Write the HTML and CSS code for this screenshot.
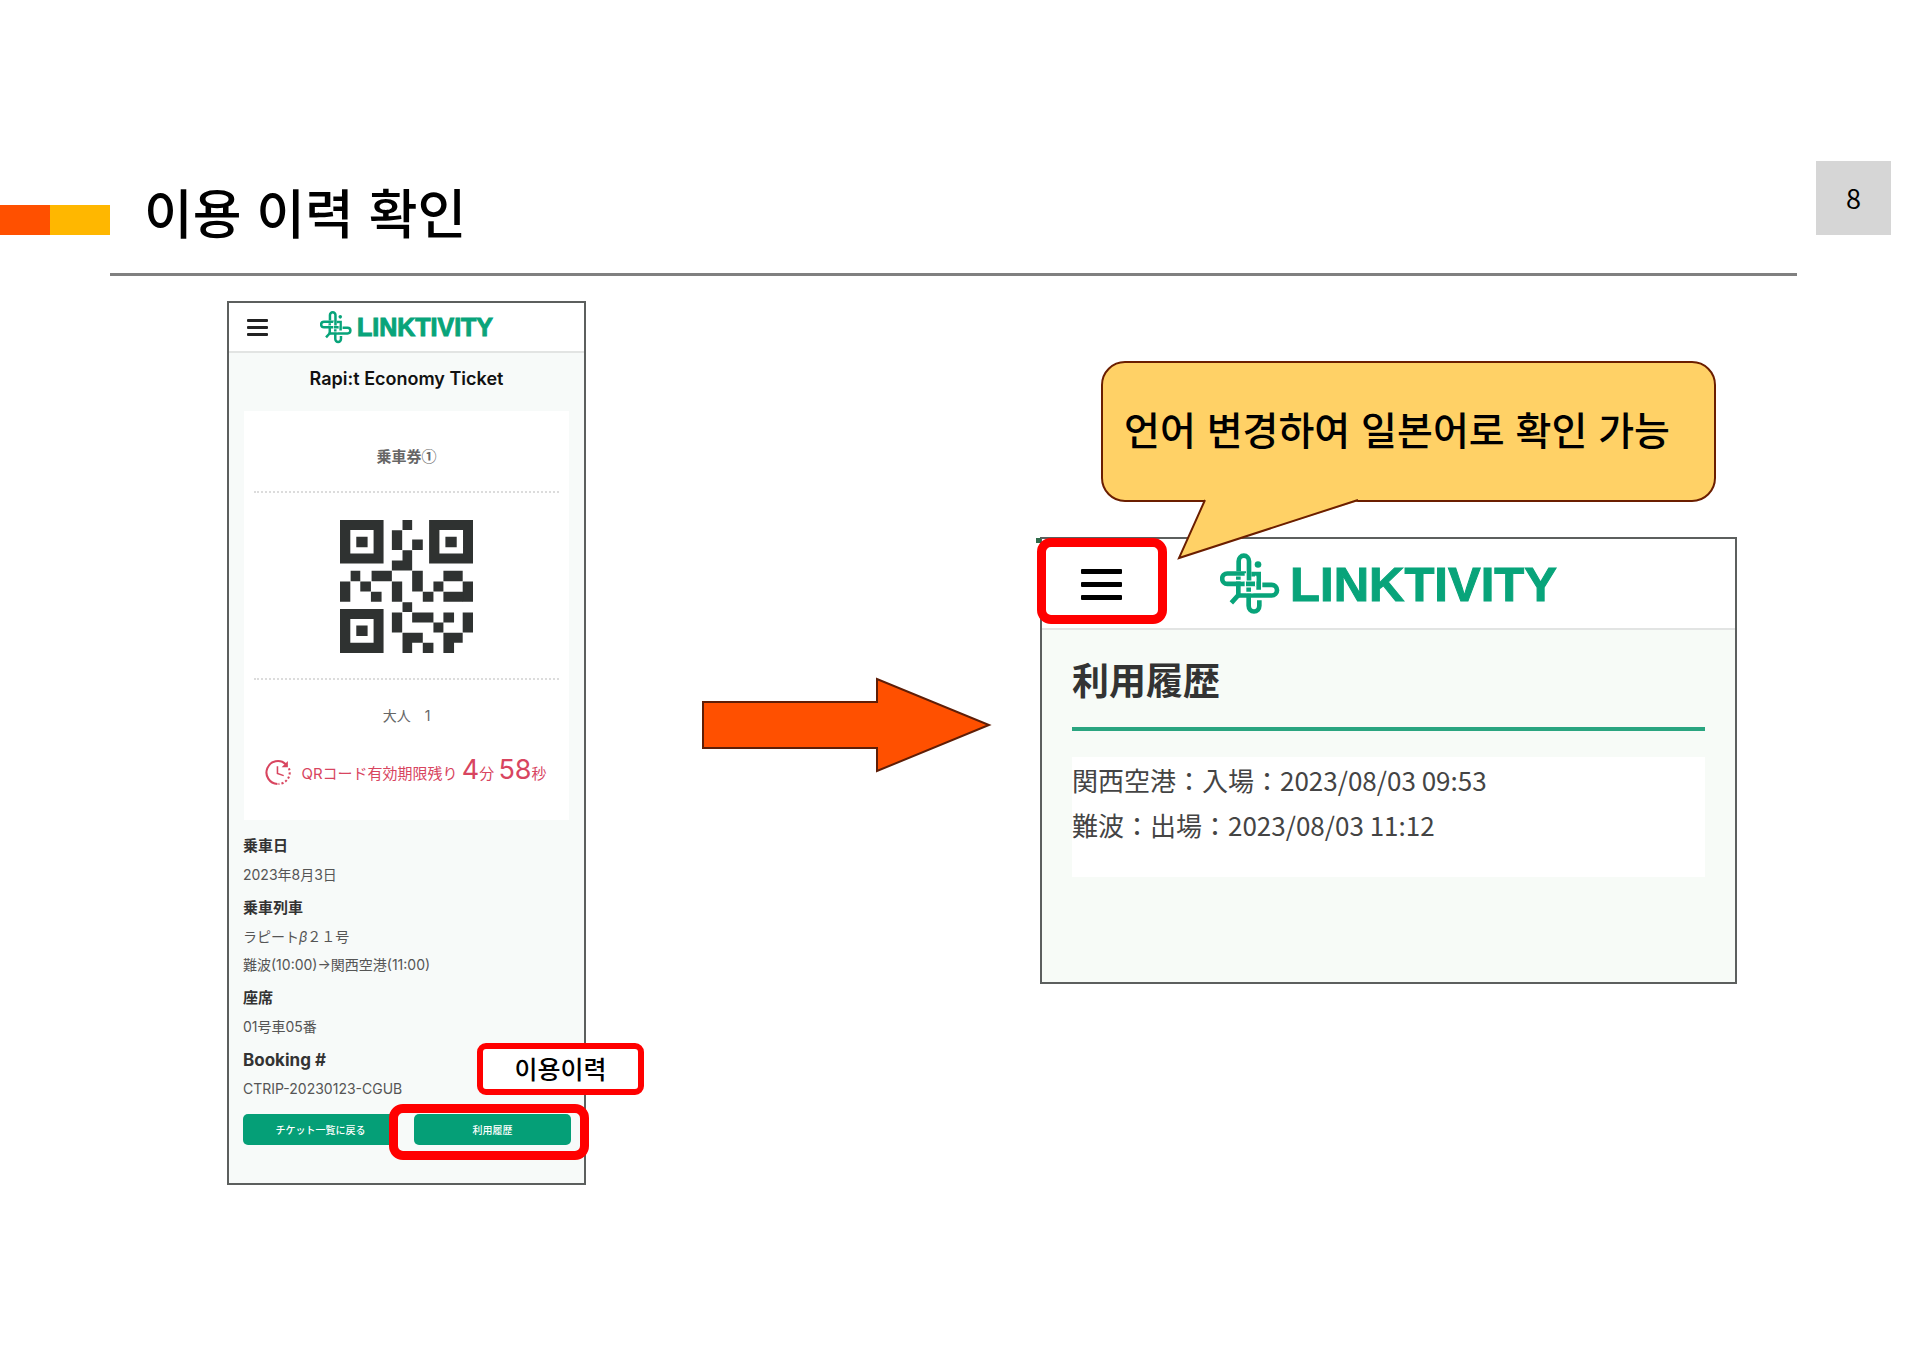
FILE: index.html
```html
<!DOCTYPE html>
<html lang="ko">
<head>
    <meta charset="UTF-8">
    <meta name="viewport" content="width=device-width, initial-scale=1.0">
    <title>이용 이력 확인</title>
    <link rel="stylesheet" href="styles.css">
</head>
<body>
    <!-- shared logo mark -->
    <svg class="sprite" aria-hidden="true">
        <symbol id="logo-mark" viewBox="0 0 180 182">
            <g fill="none" stroke="currentColor" stroke-width="14">
                <path d="M56 54V24a15 16 0 0 1 31 0V82"/>
                <path d="M78 61H22a15 15 0 0 0 0 31H112"/>
                <path d="M94 63H116V110"/>
                <path d="M127 95H155a15 15 0 0 1 0 32H48"/>
                <path d="M86 103V158a15 16 0 0 0 32 0V141"/>
                <path d="M55 70V126L34 149" stroke-linejoin="round"/>
            </g>
            <path d="M76 60V113M107 68V100" stroke="#fff" stroke-width="4"/>
            <path d="M48 82H70M78 118H100" stroke="#fff" stroke-width="4"/>
            <circle cx="114" cy="34" r="10" fill="currentColor"/>
        </symbol>
    </svg>

    <header class="slide-header">
        <div class="accent"></div>
        <h1>이용 이력 확인</h1>
        <div class="page-number">8</div>
    </header>

    <main class="slide-body">
        <section class="screen phone" lang="ja">
            <div class="app-bar">
                <button class="menu-btn" aria-label="menu"><span></span><span></span><span></span></button>
                <a class="logo" href="#"><svg><use href="#logo-mark"/></svg>LINKTIVITY</a>
            </div>

            <h2 class="ticket-name">Rapi:t Economy Ticket</h2>

            <div class="ticket-card">
                <h3>乗車券①</h3>
                <svg class="qr" viewBox="60 60 400 400" fill="#2f3231">
                    <path fill-rule="evenodd" d="M60 60h131v131h-131zM91 90v71h70v-71zM109 110h34v32h-34z"/>
                    <path fill-rule="evenodd" d="M328 60h132v131h-132zM359 90v71h71v-71zM377 110h34v32h-34z"/>
                    <path fill-rule="evenodd" d="M60 328h131v132h-131zM91 358v71h70v-71zM109 377h34v32h-34z"/>
                    <path d="M248 60h29v30h-29zM216 91h31v59h-31zM277 119h32v31h-32zM248 151h29v31h-29zM216 182h61v30h-61z"/>
                    <path d="M92 213h29v31h-29zM155 213h61v31h-61zM277 213h32v62h-32zM371 213h58v31h-58z"/>
                    <path d="M60 245h31v61h-31zM121 245h32v30h-32zM216 245h31v61h-31zM341 245h30v30h-30zM429 245h31v61h-31z"/>
                    <path d="M153 276h32v30h-32zM309 276h32v30h-32zM371 276h59v30h-59zM248 307h29v30h-29z"/>
                    <path d="M216 338h31v60h-31zM277 338h64v30h-64zM371 338h32v30h-32zM429 338h31v60h-31zM341 368h30v30h-30z"/>
                    <path d="M248 399h61v30h-61zM371 399h58v30h-58zM248 429h29v31h-29zM309 429h32v31h-32zM371 429h32v31h-32z"/>
                </svg>
                <p class="passengers">大人　1</p>
                <p class="expires">
                    <svg viewBox="0 0 24 24" fill="none" stroke="currentColor" stroke-width="2">
                        <path d="M11 23A11 11 0 1 1 19 4"/>
                        <path d="M22 8A11 11 0 0 1 12 23" stroke-dasharray="2 2"/>
                        <path d="M11 6V13L17 15" stroke-width="1.5"/>
                        <path d="M21 1V7H15z" fill="currentColor" stroke="none"/>
                    </svg>
                    <span>QRコード有効期限残り <b>4</b>分 <b>58</b>秒</span>
                </p>
            </div>

            <dl class="details">
                <dt>乗車日</dt>
                <dd>2023年8月3日</dd>
                <dt>乗車列車</dt>
                <dd>ラピート<i>β</i>２１号</dd>
                <dd>難波(10:00)→関西空港(11:00)</dd>
                <dt>座席</dt>
                <dd>01号車05番</dd>
                <dt class="latin">Booking #</dt>
                <dd>CTRIP-20230123-CGUB</dd>
            </dl>

            <div class="actions">
                <button>チケット一覧に戻る</button>
                <button class="marked">利用履歴</button>
            </div>

            <div class="note" lang="ko">이용이력</div>
        </section>

        <svg class="arrow" viewBox="0 0 290 96">
            <path d="M1 25H175V2L287 48L175 94V71H1z"/>
        </svg>

        <div class="result">
            <div class="callout">
                언어 변경하여 일본어로 확인 가능
                <svg viewBox="0 0 184 62">
                    <path d="M28 1V0H181V3L2 60L28 3z" class="tail-fill"/>
                    <path d="M28 2L2 60L181 2" class="tail-line"/>
                </svg>
            </div>

            <section class="screen history" lang="ja">
                <div class="app-bar">
                    <button class="menu-btn marked" aria-label="menu"><span></span><span></span><span></span></button>
                    <a class="logo" href="#"><svg><use href="#logo-mark"/></svg>LINKTIVITY</a>
                </div>
                <h2>利用履歴</h2>
                <div class="log">
                    <p>関西空港：入場：2023/08/03 09:53</p>
                    <p>難波：出場：2023/08/03 11:12</p>
                </div>
            </section>
        </div>
    </main>
</body>
</html>
```

FILE: styles.css
```css
* {
    margin: 0;
    padding: 0;
    box-sizing: border-box;
}

body {
    font-family: "Noto Sans CJK KR", sans-serif;
    background-color: #fff;
    color: #000;
    padding-top: 161px;
}

.sprite {
    position: absolute;
    width: 0;
    height: 0;
}

/* slide header */
.slide-header {
    display: grid;
    grid-template-columns: 110px 1fr 75px;
    align-items: start;
    padding-right: 27px;
}

.accent {
    height: 30px;
    margin-top: 44px;
    background: linear-gradient(to right, #ff5000 50px, #ffb700 50px);
}

.slide-header h1 {
    margin-right: 19px;
    padding: 0 0 12px 34px;
    border-bottom: 3px solid #808080;
    font-size: 53px;
    font-weight: 500;
    line-height: 100px;
}

.page-number {
    background-color: #d6d6d6;
    font-size: 27px;
    line-height: 74px;
    text-align: center;
}

/* slide body */
.slide-body {
    display: flex;
    align-items: flex-start;
    padding: 25px 181px 40px 227px;
}

.screen {
    position: relative;
    border: 2px solid #5c5f5e;
    font-family: "Inter", "Noto Sans CJK JP", sans-serif;
    color: #333;
}

.app-bar {
    display: grid;
    grid-template-columns: 1fr auto 1fr;
    align-items: center;
    background-color: #fff;
    border-bottom: 2px solid #e2e4e3;
}

.menu-btn {
    position: relative;
    display: flex;
    flex-direction: column;
    border: none;
    background: none;
    cursor: pointer;
}

.menu-btn span {
    background-color: #222;
    border-radius: 1px;
}

.logo {
    display: flex;
    align-items: center;
    color: #08a47a;
    font-family: "Liberation Sans", sans-serif;
    font-weight: bold;
    text-decoration: none;
    -webkit-text-stroke: 1px #08a47a;
}

.marked {
    position: relative;
}

.marked::after {
    content: "";
    position: absolute;
    border: 9px solid #f00;
    border-radius: 14px;
}

/* ticket screen */
.phone {
    flex: 0 0 359px;
    background-color: #f7faf9;
}

.phone .app-bar {
    height: 50px;
}

.phone .menu-btn {
    width: 21px;
    gap: 4px;
    margin-left: 18px;
}

.phone .menu-btn span {
    height: 3px;
}

.phone .logo {
    gap: 5px;
    font-size: 25px;
}

.phone .logo svg {
    width: 32px;
    height: 34px;
}

.ticket-name {
    margin-bottom: 6px;
    color: #111;
    font-size: 18px;
    font-weight: 600;
    line-height: 52px;
    text-align: center;
}

.ticket-card {
    margin: 0 15px;
    padding: 0 10px 26px;
    background-color: #fff;
    text-align: center;
}

.ticket-card h3 {
    padding: 30px 0 20px;
    border-bottom: 2px dotted #dcdcdc;
    color: #666;
    font-family: "Noto Sans CJK JP", sans-serif;
    font-size: 15px;
    line-height: 30px;
}

.qr {
    display: block;
    width: 133px;
    margin: 27px auto 25px;
}

.passengers {
    padding: 23px 0 21px;
    border-top: 2px dotted #dcdcdc;
    color: #666;
    font-size: 14px;
    line-height: 26px;
}

.expires {
    display: flex;
    align-items: center;
    justify-content: center;
    gap: 10px;
    color: #d8455f;
    font-size: 15px;
    line-height: 40px;
    white-space: nowrap;
}

.expires svg {
    width: 25px;
    height: 25px;
    overflow: visible;
}

.expires b {
    font-size: 27px;
    font-weight: 400;
}

.details {
    margin: 10px 14px;
}

.details dt {
    margin-top: 2px;
    font-size: 15px;
    font-weight: 700;
    line-height: 32px;
}

.details dt.latin {
    font-size: 17px;
}

.details dd {
    padding-bottom: 2px;
    color: #555;
    font-size: 14px;
    line-height: 26px;
}

.actions {
    display: grid;
    grid-template-columns: 1fr 157px;
    gap: 16px;
    padding: 0 13px 38px 14px;
}

.actions button {
    height: 31px;
    border: none;
    border-radius: 5px;
    background-color: #059f77;
    color: #fff;
    font-family: inherit;
    font-size: 10px;
    font-weight: 500;
    cursor: pointer;
}

.actions .marked::after {
    inset: -10px -18px -15px -25px;
}

.note {
    position: absolute;
    top: 740px;
    right: -60px;
    width: 167px;
    padding-bottom: 2px;
    border: 6px solid #f00;
    border-radius: 9px;
    background-color: #fff;
    color: #000;
    font-family: "Noto Sans CJK KR", sans-serif;
    font-size: 25px;
    font-weight: 500;
    line-height: 38px;
    text-align: center;
}

.arrow {
    flex: none;
    width: 290px;
    margin: 376px 48px 0 116px;
    fill: #ff5000;
    stroke: #5e1e07;
    stroke-width: 2;
}

/* history screen with callout */
.result {
    flex: 1;
    padding-top: 60px;
}

.callout {
    position: relative;
    z-index: 1;
    margin: 0 21px 35px 61px;
    padding: 0 0 6px 21px;
    border: 2px solid #6b1e00;
    border-radius: 24px;
    background-color: #ffd166;
    font-size: 39px;
    font-weight: 500;
    line-height: 131px;
    white-space: nowrap;
}

.callout svg {
    position: absolute;
    top: 135px;
    left: 74px;
    width: 184px;
}

.tail-fill {
    fill: #ffd166;
}

.tail-line {
    fill: none;
    stroke: #6b1e00;
    stroke-width: 2;
}

.history {
    padding-bottom: 105px;
    background-color: #f7fbf7;
}

/* green tick at the panel corner */
.history::before {
    content: "";
    position: absolute;
    top: -1px;
    left: -6px;
    width: 5px;
    height: 5px;
    background-color: #2f6b4a;
}

.history .app-bar {
    height: 91px;
}

.history .menu-btn {
    width: 41px;
    gap: 8px;
    margin: 2px 0 0 39px;
}

.history .menu-btn span {
    height: 5px;
    background-color: #000;
}

.history .menu-btn.marked::after {
    inset: -31px -45px -24px -44px;
}

.history .logo {
    gap: 10px;
    font-size: 49px;
}

.history .logo svg {
    width: 60px;
    height: 61px;
}

.history h2 {
    margin: 0 30px 26px;
    padding: 21px 0 20px;
    border-bottom: 4px solid #2aa580;
    font-family: "Noto Sans CJK JP", sans-serif;
    font-size: 37px;
    line-height: 56px;
}

.log {
    margin: 0 30px;
    padding-bottom: 30px;
    background-color: #fff;
    color: #444;
    font-family: "Noto Sans CJK JP", sans-serif;
    font-size: 26px;
    line-height: 45px;
}
```
